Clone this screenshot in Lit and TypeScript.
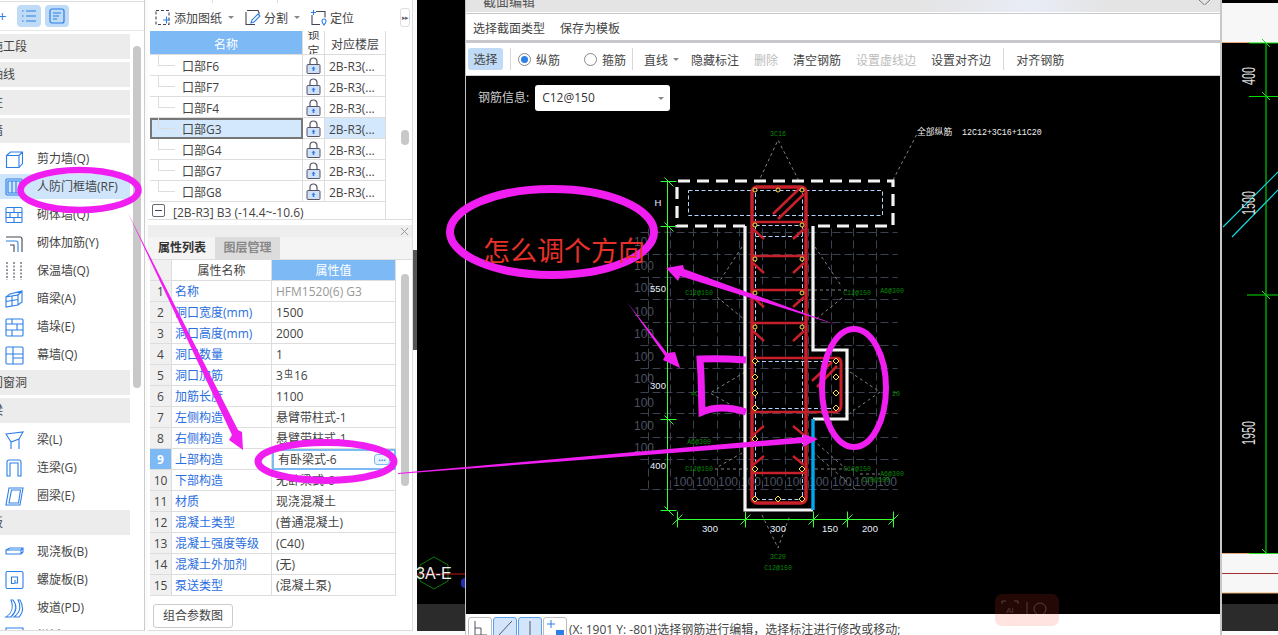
import { LitElement, html, css, svg } from "lit";
import { customElement } from "lit/decorators.js";

const ic: Record<string, any> = {
  cube: svg`<path d="M1.5 5.5h12.5v12H1.5zM1.5 5.5l4-3.5h12v11.5l-3.5 4M14 5.5l3.5-3.5"/>`,
  door: svg`<rect x="1" y="1" width="16" height="16" rx="1"/><path d="M3 3h12v12H3zM7 3v12M11 3v12"/>`,
  brick: svg`<rect x="1" y="1.5" width="16" height="15" rx="1"/><path d="M1 6.5h16M1 11.5h16M9 1.5v5M5 6.5v5M13 6.5v5M9 11.5v5"/>`,
  rebar: svg`<path stroke="#445" d="M1 3h14a2 2 0 0 1 2 2v13"/><path d="M1 7h10a2 2 0 0 1 2 2v9"/><path stroke="#445" d="M5 11h4v7"/>`,
  insul: svg`<path stroke="#445" stroke-dasharray="2 1.5" d="M2 0v18M9 0v18M16 0v18"/>`,
  hidden: svg`<path d="M1 7l4-3 12-3v11l-4 3-12 2zM1 7l12-2v10M13 5l4-4M1 11.5l12-2" /><path d="M7 6v10"/>`,
  pier: svg`<rect x="1" y="1" width="17" height="17" rx="1"/><path d="M1 6h17M1 12h17M7 1v5M12 6v6M7 12v6"/>`,
  curtain: svg`<rect x="1" y="1" width="17" height="17" rx="1"/><path d="M1 8h17M8 1v17M8 12h10"/>`,
  beam: svg`<path d="M1 3L18 1L14 8L6 11ZM6 11v7M14 8v10"/>`,
  link: svg`<path d="M2 17V3a2 2 0 0 1 2-2h10a2 2 0 0 1 2 2v14h-3V4H5v13z"/>`,
  ring: svg`<path d="M4 1h14l-3 17H1zM6.5 3h9l-2 13H4z"/>`,
  slab: svg`<path d="M1 7l4-2h13v4l-2 2H1zM1 7h15v4M16 7l2-2"/>`,
  spiral: svg`<rect x="1" y="0.5" width="17" height="17" rx="1.5"/><path d="M9.5 12.5H6.5V6h6v6h-2.5V9"/>`,
  ramp: svg`<path d="M8 1c4 5 4 11-2 17H1c5-3 8-9 5-17zM13 1c3 5 3 12-4 17h5c5-5 4-12 1-17z"/>`,
  edge: svg`<path d="M1 1h17v6H1zM1 7v11M18 7v11"/>`,
};

const wallItems = [
  ["cube", "剪力墙(Q)"], ["door", "人防门框墙(RF)", true], ["brick", "砌体墙(Q)"], ["rebar", "砌体加筋(Y)"],
  ["insul", "保温墙(Q)"], ["hidden", "暗梁(A)"], ["pier", "墙垛(E)"], ["curtain", "幕墙(Q)"],
];
const beamItems = [["beam", "梁(L)"], ["link", "连梁(G)"], ["ring", "圈梁(E)"]];
const slabItems = [["slab", "现浇板(B)"], ["spiral", "螺旋板(B)"], ["ramp", "坡道(PD)"], ["edge", "栏板(K)"]];

const trees = ["口部F6", "口部F7", "口部F4", "口部G3", "口部G4", "口部G7", "口部G8"];
const props: [string, any][] = [
  ["名称", "HFM1520(6) G3"], ["洞口宽度(mm)", "1500"], ["洞口高度(mm)", "2000"], ["洞口数量", "1"],
  ["洞口加筋", null], ["加筋长度", "1100"], ["左侧构造", "悬臂带柱式-1"], ["右侧构造", "悬臂带柱式-1"],
  ["上部构造", "有卧梁式-6"], ["下部构造", "无卧梁式-6"], ["材质", "现浇混凝土"], ["混凝土类型", "(普通混凝土)"],
  ["混凝土强度等级", "(C40)"], ["混凝土外加剂", "(无)"], ["泵送类型", "(混凝土泵)"],
];

const lock = html`<svg class="lock" viewBox="0 0 15 17"><path d="M4 8V4.500a3.500 3.500 0 0 1 7 0V8" fill="none" stroke="#556" stroke-width="1.2"/><rect x="1" y="7.500" width="13" height="9" rx="1" fill="#cfe0f7" stroke="#556" stroke-width="1"/><path d="M7.500 9.500l2 2.200H8.300v2.300H6.700v-2.300H5.500z" fill="#2d7fe8"/></svg>`;

const hLines = [232, 254, 277, 299, 322, 345, 368, 392, 413, 437, 459, 489];
const vLines = [648, 670, 693, 717, 739, 762, 785, 808, 831, 853, 876];
const leftNums = [242, 266, 288, 312, 334, 357, 379, 403, 426, 448];
const bottomNums = [683, 706, 728, 751, 773, 796, 819, 842, 864, 887];
const dots: [number, number][] = [[755, 190], [778, 190], [802, 190], [755, 225], [802, 225], [755, 259], [802, 259], [755, 293], [802, 293], [755, 327], [802, 327]];
const diamonds: [number, number][] = [[755, 361], [755, 377], [755, 393], [755, 408], [755, 439], [755, 469], [802, 469], [755, 499], [778, 499], [802, 499], [836, 361], [836, 377], [836, 393], [836, 408]];
const hooks = [263, 297, 331, 229];
const greens: [string, number, number][] = [
  ["3C16", 778, 136], ["C12@150", 699, 295], ["C12@150", 857, 295], ["A6@300", 892, 293], ["A6@300", 699, 444],
  ["C12@150", 699, 471], ["C12@150", 857, 471], ["A6@300", 892, 476], ["C10@100", 876, 482], ["4C", 695, 396],
  ["20", 896, 396], ["3C20", 778, 559], ["C12@150", 778, 570],
];
const whites: [string, number, number][] = [
  ["H", 658, 206], ["550", 658, 292], ["300", 658, 389], ["400", 658, 469],
  ["300", 710, 532], ["300", 778, 532], ["150", 830, 532], ["200", 870, 532],
];
const vTicks: [number, number][] = [[668, 181], [668, 226], [668, 419], [668, 510]];
const hTicks: [number, number][] = [[677, 519], [745, 519], [813, 519], [847, 519], [893, 519]];

@customElement("app-root")
export class AppRoot extends LitElement {
  static styles = css`
    :host { display: block; position: relative; width: 1278px; height: 635px; overflow: hidden; background: #fbfbfb; color: #444;
      font-family: "Open Sans", "Noto Sans CJK SC", sans-serif; font-size: 12px; line-height: 1; }
    * { box-sizing: border-box; }
    .page { display: flex; height: 635px; }

    .left { width: 145px; height: 631px; flex: none; background: #fff; border-right: 1px solid #ccc; border-bottom: 1px solid #ddd; overflow: hidden; }
    .ltop { height: 30px; margin-top: 1px; border-top: 1px solid #ddd; border-bottom: 1px solid #e8e8e8; display: flex; align-items: center; gap: 4px; padding-left: 17px; position: relative; }
    .plus { margin-left: -19px; width: 15px; color: #2d7fe8; font-size: 15px; text-align: left; }
    .tbtn { width: 24px; height: 22px; border-radius: 4px; background: #bfdbf5; display: flex; align-items: center; justify-content: center; }
    .tbtn svg { width: 16px; height: 16px; fill: none; stroke: #2d7fe8; stroke-width: 1.2; }
    .lbody { display: flex; gap: 3px; padding-top: 3px; }
    .list { width: 130px; display: flex; flex-direction: column; gap: 3px; flex: none; }
    .sec { height: 25px; background: #ececec; display: flex; align-items: center; overflow: hidden; flex: none; }
    .sec span { margin-left: -9px; white-space: nowrap; }
    .items.m2 { margin: -2px 0 -1px; }
    .items.m1 { margin: -1px 0 -2px; }
    .item { height: 28px; display: flex; align-items: center; white-space: nowrap; padding: 2px 0 1px 5px; }
    .item.sel { background: #cfe5fc; background-clip: content-box; padding-left: 0; }
    .item.sel svg { margin-left: 5px; }
    .item svg { width: 18px; height: 18px; margin-right: 14px; fill: none; stroke: #2d7fe8; stroke-width: 1.1; flex: none; overflow: visible; }
    .lthumb { width: 8px; height: 342px; margin-top: 12px; background: #c8c8c8; border-radius: 4px; }

    .mid { width: 265px; height: 631px; margin-left: 3px; flex: none; background: #fff; border-right: 1px solid #ddd; border-bottom: 1px solid #ddd; display: flex; flex-direction: column; padding-left: 2px; overflow: hidden; }
    .mtabs { height: 3px; display: flex; flex: none; margin-left: -2px; }
    .mtabs i { width: 65px; border-right: 1px solid #ddd; }
    .mbar { height: 28px; display: flex; align-items: center; flex: none; padding: 4px 0 0 4px; }
    .mbar svg { width: 17px; height: 17px; fill: none; stroke: #445; stroke-width: 1.1; flex: none; margin: -4px 3px 0 0; }
    .tri { width: 0; height: 0; border-left: 3px solid transparent; border-right: 3px solid transparent; border-top: 3px solid #888; flex: none; }
    .mbar .tri { margin: -4px 10px 0 6px; }
    .more { margin: -4px 2px 0 auto; width: 10px; height: 19px; border: 1px solid #ddd; border-radius: 3px; font-size: 7px; color: #667; display: flex; align-items: center; justify-content: center; letter-spacing: -1px; }
    .ttop { display: flex; height: 189px; flex: none; border-bottom: 1px solid #ddd; margin-left: -2px; padding-left: 2px; }
    .tgrid { display: grid; grid-template-columns: 153px 22px 61px; grid-template-rows: 24px repeat(7, 21px) 18px; width: 236px; flex: none; }
    .tgrid > div { border-right: 1px solid #ddd; border-bottom: 1px solid #ddd; display: flex; align-items: center; overflow: hidden; }
    .tgrid .h { background: #fff; justify-content: center; border-right: 1px solid #ddd; padding-top: 4px; }
    .tgrid .h.b { background: #7db9f5; color: #fff; }
    .tgrid .h.lk { padding-top: 0; }
    .lockhead { width: 13px; text-align: center; line-height: 17px; flex: none; }
    .tree { padding: 3px 0 0 32px; position: relative; }
    .tree::before { content: ""; position: absolute; left: 8px; top: 0; bottom: 10px; width: 1px; background: #ddd; }
    .tree::after { content: ""; position: absolute; left: 8px; top: 10px; width: 17px; height: 1px; background: #ddd; }
    .tree.sel { background: #d3e8fd; outline: 2px solid #777; outline-offset: -2px; }
    .cellb { justify-content: center; }
    .lock { width: 15px; height: 17px; }
    .cellc { padding: 3px 0 0 4px; white-space: nowrap; }
    .cellc.sel { background: #d3e8fd; }
    .grp { grid-column: 1 / 4; padding-left: 2px; gap: 8px; }
    .grp span:last-child { padding-top: 4px; }
    .box { width: 13px; height: 13px; border: 1px solid #667; border-radius: 2px; display: flex; align-items: center; justify-content: center; flex: none; }
    .box::before { content: ""; width: 7px; height: 1px; background: #445; }
    .tthumb { width: 8px; height: 15px; background: #c8c8c8; border-radius: 4px; margin: 99px 0 0 15px; }

    .gap5 { height: 5px; flex: none; }
    .phead { height: 12px; background: #eee; display: flex; justify-content: flex-end; align-items: center; flex: none; margin-left: -2px; color: #999; padding-right: 2px; }
    .phead svg { width: 7px; height: 7px; stroke: #999; margin-right: 2px; }
    .tabs { height: 23px; display: flex; flex: none; background: #f4f4f4; margin-left: -2px; padding-left: 2px; border-bottom: 1px solid #ddd; }
    .tab { width: 64px; display: flex; align-items: center; justify-content: center; font-weight: 700; color: #333; }
    .tab.off { width: 65px; background: #dcdcdc; color: #888; margin-left: 1px; }
    .pbody { display: flex; height: 340px; flex: none; }
    .pgrid { display: grid; grid-template-columns: 22px 100px 124px; grid-template-rows: 21px repeat(15, 21px); width: 246px; flex: none; overflow: hidden; }
    .pgrid > div { display: flex; align-items: center; border-right: 1px solid #ddd; border-bottom: 1px solid #ddd; white-space: nowrap; overflow: hidden; padding-top: 2px; }
    .pnum { background: #f0f0f0; justify-content: center; color: #444; }
    .pnum.on { background: #7db9f5; color: #fff; font-weight: 700; }
    .pname { color: #2a6ee0; padding-left: 3px; }
    .pval { padding-left: 4px; color: #444; }
    .pval.grey { color: #999; }
    .pval.on { outline: 2px solid #7db9f5; outline-offset: -2px; padding-left: 6px; justify-content: space-between; padding-right: 5px; }
    .dots { width: 16px; height: 11px; border: 1px solid #7db9f5; border-radius: 3px; background: #e8f2fd; font-size: 9px; color: #2d7fe8; display: flex; align-items: center; justify-content: center; font-weight: 700; margin-top: -2px; }
    .sup { font-size: 9px; position: relative; top: -3px; margin: 0 1px; }
    .phl { justify-content: center; }
    .phb { justify-content: center; background: #7db9f5; color: #fff; }
    .pthumb { width: 8px; height: 212px; margin: 14px 0 0 5px; background: #c8c8c8; border-radius: 4px; flex: none; }
    .pfoot { padding: 4px 0 0 3px; flex: none; }
    .gbtn { width: 80px; height: 24px; border: 1px solid #ccc; border-radius: 3px; display: flex; align-items: center; justify-content: center; background: #fff; }

    .split { width: 4px; height: 631px; flex: none; display: flex; flex-direction: column; }
    .split i { display: block; height: 100px; margin-top: 250px; background: #555; }

    .cadl { width: 48px; flex: none; height: 635px; display: block; }
    .cadr { width: 56px; flex: none; height: 635px; display: block; }

    .dlg { width: 757px; height: 635px; flex: none; display: flex; flex-direction: column; border-left: 1px solid #c4c4c4; border-right: 2px solid #c8c8c8; background: #fff; overflow: hidden; }
    .dtitle { height: 12px; flex: none; background: linear-gradient(90deg, #e4e4e4 60%, #e8ecf6 75%, #e4e4e4 85%); display: flex; justify-content: space-between; padding: 0 10px 0 17px; overflow: hidden; color: #555; font-size: 13px; }
    .dtitle span { margin-top: -5px; }
    .dtitle svg { width: 11px; height: 5px; fill: none; stroke: #777; margin-top: 0; }
    .dmenu { height: 30px; flex: none; margin-top: 1px; padding: 4px 0 0 7px; border-top: 1px solid #c8c8cc; border-bottom: 3px solid #c8c8cc; display: flex; align-items: center; gap: 15px; background: #fff; }
    .dbar { height: 33px; flex: none; display: flex; align-items: center; padding-left: 2px; border-bottom: 1px solid #ccc; white-space: nowrap; }
    .dbar .t { padding-top: 4px; }
    .sel-btn { width: 35px; height: 22px; background: #bfdbf5; border-radius: 3px; display: flex; align-items: center; justify-content: center; flex: none; padding-top: 2px; }
    .vsep { width: 1px; height: 22px; background: #d8d8d8; flex: none; }
    .radio { width: 13px; height: 13px; border-radius: 50%; border: 1px solid #888; display: flex; align-items: center; justify-content: center; flex: none; }
    .radio.on::before { content: ""; width: 7px; height: 7px; border-radius: 50%; background: #2d7fe8; }
    .s6 { margin-left: 6px; } .s5 { margin-left: 5px; } .s23 { margin-left: 24px; } .s12 { margin-left: 12px; } .s11 { margin-left: 11px; }
    .s15 { margin-left: 15px; } .s7 { margin-left: 7px; }
    .muted { color: #bbb; }
    .dbar .tri { margin: 0 0 0 5px; }
    .canvas { height: 538px; flex: none; background: #000; position: relative; }
    .canvas > svg { display: block; width: 754px; height: 538px; }
    .info { position: absolute; left: 12px; top: 9px; display: flex; align-items: center; gap: 6px; color: #ccc; }
    .sbox { width: 135px; height: 26px; background: #fff; border-radius: 3px; color: #333; display: flex; align-items: center; justify-content: space-between; padding: 0 6px 0 7px; }
    .stat { height: 21px; flex: none; display: flex; align-items: flex-start; padding: 3px 0 0 2px; gap: 1px; white-space: nowrap; overflow: hidden; background: #fff; }
    .sb { width: 24px; height: 22px; border: 1px solid #bbb; border-radius: 3px; flex: none; display: flex; align-items: center; justify-content: center; background: #fff; }
    .sb.on { background: #d3e5fb; border-color: #5aa0ee; }
    .sb svg { width: 18px; height: 18px; fill: none; stroke: #556; }
    .stxt { margin: 7px 0 0 1px; color: #444; }

    .notes { position: absolute; left: 0; top: 0; width: 1278px; height: 635px; pointer-events: none; }
  `;

  private row(i: any[]) {
    return html`<div class="item ${i[2] ? "sel" : ""}"><svg viewBox="0 0 18 18">${ic[i[0]]}</svg>${i[1]}</div>`;
  }

  private drawing() {
    const mono = "Liberation Mono, monospace";
    return svg`
      <g stroke="#3a4150" stroke-width="1" stroke-dasharray="8 4" fill="none" transform="translate(.5 .5)">
        ${hLines.map((y) => svg`<line x1="640" x2="897" y1=${y} y2=${y}/>`)}
        ${vLines.map((x) => svg`<line y1="228" y2="490" x1=${x} x2=${x}/>`)}
      </g>
      <g fill="#4a5160" font-family="Liberation Sans, sans-serif" font-size="12" text-anchor="middle">
        ${leftNums.map((y) => svg`<text x="644" y=${y + 4}>100</text>`)}
        ${bottomNums.map((x) => svg`<text x=${x} y="486">100</text>`)}
      </g>
      <g stroke="#808080" stroke-width="1" stroke-dasharray="3 3" fill="none">
        <path d="M758 183L778 140L800 183M893 180L917 134"/>
        <path d="M742 247L717 285M717 297L745 320M815 247L842 287M842 298L815 320"/>
        <path d="M745 372L710 393L745 413M850 372L880 392L850 413"/>
        <path d="M742 453L716 468M813 440L845 468M813 452L856 490M762 515L778 548L790 515"/>
        <path d="M778 290H850M715 469H750M815 469H855M860 474H880"/>
      </g>
      <g stroke="#b4d4ff" stroke-width="1" stroke-dasharray="4 2.5" fill="none" transform="translate(.5 .5)">
        <rect x="688" y="190" width="194" height="25"/>
        <path d="M755 186V503M802 186V503M755 225H802M755 236H802M755 361H836M755 408H836M755 499H802M840 361V408"/>
      </g>
      <g stroke="#f4f4f4" stroke-width="3.2" fill="none">
        <path stroke-dasharray="12 7" d="M745 226H677V181H893V226H813"/>
        <path d="M745 226V510H813M813 226V350H847V419H813"/>
      </g>
      <path d="M813 419V510" stroke="#00a8f0" stroke-width="3.4"/>
      <g stroke="#c8202a" fill="none" stroke-width="3.4">
        <rect x="752" y="187" width="54" height="316" rx="5"/>
        <path d="M838 358q3 1 3 5V405q0 5-3 6" stroke-width="3"/>
        <path stroke-width="2.6" d="M752 222H806M752 256H806M752 290H806M752 323H806M752 358H838M752 412H838M752 473H806"/>
        <path stroke-width="2.6" d="M773 214L800 188M778 219L804 194M812 381L832 362M817 387L837 366"/>
        <path stroke-width="2.4" d="M753 435L764 426M804 435L793 426M753 465L764 456M804 465L793 456"/>
        ${hooks.map((y) => svg`<path stroke-width="2.4" d="M753 ${y}L764 ${y + 10}M804 ${y}L793 ${y + 10}"/>`)}
      </g>
      <g fill="#000" stroke="#ffe14a" stroke-width="1">
        ${dots.map(([x, y]) => svg`<circle cx=${x} cy=${y} r="2"/>`)}
        ${diamonds.map(([x, y]) => svg`<path d="M${x} ${y - 3}l3 3-3 3-3-3z"/>`)}
      </g>
      <g stroke="#33ff33" stroke-width="1" fill="none" transform="translate(.5 .5)">
        <path d="M667 181V510M677 519H893"/>
        ${vTicks.map(([x, y]) => svg`<path d="M${x - 8} ${y}H${x + 8}M${x - 4} ${y - 4}L${x + 5} ${y + 5}"/>`)}
        ${hTicks.map(([x, y]) => svg`<path d="M${x} ${y - 8}V${y + 8}M${x - 5} ${y + 5}L${x + 5} ${y - 5}"/>`)}
      </g>
      <g fill="#0a8a0a" font-family=${mono} font-size="6.600" text-anchor="middle">
        ${greens.map(([t, x, y]) => svg`<text x=${x} y=${y}>${t}</text>`)}
      </g>
      <g fill="#e8f2ff" font-family="Liberation Sans, sans-serif" font-size="9.500" text-anchor="middle">
        ${whites.map(([t, x, y]) => svg`<text x=${x} y=${y}>${t}</text>`)}
      </g>
      <text x="917" y="135" fill="#eee" font-family="Noto Sans CJK SC, sans-serif" font-size="8.800">全部纵筋</text>
      <text x="962" y="135" fill="#eee" font-family=${mono} font-size="8.300">12C12+3C16+11C20</text>
    `;
  }

  render() {
    return html`
      <div class="page">
        <aside class="left">
          <div class="ltop">
            <span class="plus">+</span>
            <div class="tbtn"><svg viewBox="0 0 16 16"><path d="M5 3h10M5 8h10M5 13h10M1 3h1.500M1 8h1.500M1 13h1.500"/></svg></div>
            <div class="tbtn"><svg viewBox="0 0 16 16"><rect x="1" y="1" width="14" height="14" rx="2"/><path d="M4 5h8M4 8h6M4 11h4"/></svg></div>
          </div>
          <div class="lbody">
            <div class="list">
              ${["施工段", "轴线", "柱", "墙"].map((s) => html`<div class="sec"><span>${s}</span></div>`)}
              <div class="items m2">${wallItems.map((i) => this.row(i))}</div>
              <div class="sec"><span>门窗洞</span></div>
              <div class="sec"><span>梁</span></div>
              <div class="items m1">${beamItems.map((i) => this.row(i))}</div>
              <div class="sec"><span>板</span></div>
              <div class="items m1">${slabItems.map((i) => this.row(i))}</div>
            </div>
            <div class="lthumb"></div>
          </div>
        </aside>

        <section class="mid">
          <div class="mtabs"><i></i><i></i></div>
          <div class="mbar">
            <svg viewBox="0 0 17 17"><path stroke-dasharray="3 2" d="M2 1.500h13v14H2z"/><path stroke="#2d7fe8" d="M9 11h7M12.500 7.500v7"/></svg>添加图纸<span class="tri"></span>
            <svg viewBox="0 0 17 17"><path d="M3 1.500h11l1 2v2M2 3v12.500h9"/><path stroke="#2d7fe8" d="M7 14l1-3 6-6 2 2-6 6z"/></svg>分割<span class="tri"></span>
            <svg viewBox="0 0 17 17"><path d="M6 2.500h9v6M2 6v9.500h8"/><path stroke="#2d7fe8" d="M3.500 1v5M1 3.500h5M12 12a2 2 0 1 1 4 0c0 2-2 4-2 4s-2-2-2-4z"/></svg><span>定位</span>
            <div class="more">▸▸</div>
          </div>
          <div class="ttop">
            <div class="tgrid">
              <div class="h b">名称</div>
              <div class="h lk"><span class="lockhead">锁定</span></div>
              <div class="h">对应楼层</div>
              ${trees.map((t, i) => html`
                <div class="tree ${i === 3 ? "sel" : ""}">${t}</div>
                <div class="cellb">${lock}</div>
                <div class="cellc ${i === 3 ? "sel" : ""}">2B-R3(...</div>`)}
              <div class="grp"><span class="box"></span><span>[2B-R3] B3 (-14.4~-10.6)</span></div>
            </div>
            <div class="tthumb"></div>
          </div>
          <div class="gap5"></div>
          <div class="phead"><svg viewBox="0 0 7 7"><path d="M0 0l7 7M7 0l-7 7"/></svg></div>
          <div class="tabs"><div class="tab">属性列表</div><div class="tab off">图层管理</div></div>
          <div class="pbody">
            <div class="pgrid">
              <div class="pnum"></div><div class="phl">属性名称</div><div class="phb">属性值</div>
              ${props.map(([n, v], i) => html`
                <div class="pnum ${i === 8 ? "on" : ""}">${i + 1}</div>
                <div class="pname">${n}</div>
                <div class="pval ${i === 0 ? "grey" : ""} ${i === 8 ? "on" : ""}">
                  ${v === null ? html`3<span class="sup">虫</span>16` : v}${i === 8 ? html`<span class="dots">···</span>` : ""}
                </div>`)}
            </div>
            <div class="pthumb"></div>
          </div>
          <div class="pfoot"><div class="gbtn">组合参数图</div></div>
        </section>

        <div class="split"><i></i></div>

        <svg class="cadl" viewBox="417 0 48 635">
          <rect x="417" y="0" width="48" height="631" fill="#000"/>
          <rect x="417" y="604" width="48" height="27" fill="#2b2b2b"/>
          <path d="M434 557l14 8v16l-14 8-14-8v-16z" fill="none" stroke="#0a7a0a"/>
          <path d="M417 574H465" stroke="#c01818"/>
          <text x="416" y="579" fill="#eee" font-family="Liberation Sans, sans-serif" font-size="16">3A-E</text>
          <path d="M465 578a4 4 0 0 0-4 5 4 4 0 0 0 4 5z" fill="#2030b0"/>
        </svg>

        <div class="dlg">
          <div class="dtitle"><span>截面编辑</span><svg viewBox="0 0 11 5"><path d="M0 0l5.500 5 5.500-5"/></svg></div>
          <div class="dmenu"><span>选择截面类型</span><span>保存为模板</span></div>
          <div class="dbar">
            <div class="sel-btn">选择</div><span class="vsep s7"></span>
            <span class="radio on s7"></span><span class="t s5">纵筋</span>
            <span class="radio s23"></span><span class="t s5">箍筋</span><span class="vsep s6"></span>
            <span class="t s11">直线</span><span class="tri"></span>
            <span class="t s12">隐藏标注</span><span class="t muted s15">删除</span><span class="t s15">清空钢筋</span>
            <span class="t muted s15">设置虚线边</span><span class="t s15">设置对齐边</span><span class="vsep s12"></span><span class="t s12">对齐钢筋</span>
          </div>
          <div class="canvas">
            <svg viewBox="466 76 754 538">${this.drawing()}</svg>
            <div class="info">钢筋信息:<div class="sbox">C12@150<span class="tri"></span></div></div>
          </div>
          <div class="stat">
            <div class="sb"><svg viewBox="0 0 18 18"><path d="M4 2V16H16M4 9h6v7"/></svg></div>
            <div class="sb on"><svg viewBox="0 0 18 18"><path d="M2 17L16 2"/></svg></div>
            <div class="sb on"><svg viewBox="0 0 18 18"><path d="M9 2V17"/></svg></div>
            <div class="sb"><svg viewBox="0 0 18 18"><path stroke="#2d7fe8" d="M1 5h8M5 1v8"/><rect x="10" y="11" width="8" height="7" fill="#2d7fe8" stroke="none"/></svg></div>
            <span class="stxt">(X: 1901 Y: -801)选择钢筋进行编辑，选择标注进行修改或移动;</span>
          </div>
        </div>

        <svg class="cadr" viewBox="1222 0 56 635">
          <rect x="1222" y="0" width="56" height="631" fill="#000"/>
          <rect x="1222" y="3" width="56" height="40" fill="#f7f7f7"/>
          <path d="M1222 42.500H1250" stroke="#e8a878"/>
          <path d="M1249 43H1278M1249 96.500H1278M1247 295H1278" stroke="#00e000"/>
          <path d="M1266 43V553" stroke="#009a00" stroke-width="1.600"/>
          <path d="M1262 39l8 8M1262 92l8 8M1262 291l8 8M1262 549l8 8" stroke="#22dd22"/>
          <path d="M1223 227L1278 172M1232 237L1278 190" stroke="#18d8e0" stroke-width="1.200"/>
          <g fill="#ddd" font-family="Liberation Sans, sans-serif" font-size="15">
            <text transform="translate(1255 85) rotate(-90) scale(.72 1.2)">400</text>
            <text transform="translate(1255 215) rotate(-90) scale(.72 1.2)">1500</text>
            <text transform="translate(1255 445) rotate(-90) scale(.72 1.2)">1950</text>
          </g>
          <rect x="1222" y="553" width="56" height="40" fill="#f7f7f7"/>
          <path d="M1222 553.500H1250" stroke="#e8a878"/>
          <path d="M1249 553.500H1278" stroke="#22dd22"/>
          <path d="M1222 573.500H1278" stroke="#a03030"/>
          <path d="M1222 593H1278" stroke="#e8b070"/>
          <rect x="1222" y="604" width="56" height="27" fill="#2b2b2b"/>
        </svg>
      </div>

      <svg class="notes" viewBox="0 0 1278 635">
        <g fill="none" stroke="#f01ef0">
          <ellipse cx="79.500" cy="190" rx="59" ry="20" stroke-width="6.500"/>
          <ellipse cx="326" cy="461.500" rx="68" ry="19" stroke-width="7"/>
          <ellipse cx="552" cy="232" rx="102" ry="43" stroke-width="8"/>
          <ellipse cx="854" cy="388" rx="32" ry="59" stroke-width="6"/>
          <path d="M746 360Q720 358 700 359L701 375L702 412Q720 404 746 412" stroke-width="7"/>
        </g>
        <g fill="#f01ef0">
          <path d="M128 213L238 430L242 432L243 450L229 440L232 435Z"/>
          <path d="M398 473L803 437V434L818 439L803 447V443L398 474Z"/>
          <path d="M837 325L684 269L683 265L666 268L678 281L680 276Z"/>
          <path d="M627 302L667 353L675 352L680 368L663 360L665 356Z"/>
        </g>
        <text x="483" y="261" fill="#e8302a" font-family="Noto Sans CJK SC, sans-serif" font-size="27">怎么调个方向</text>
        <g>
          <rect x="995" y="594" width="64" height="32" rx="7" fill="#ff3c28" fill-opacity=".14"/>
          <g fill="none" stroke="#fff" stroke-opacity=".22" stroke-width="1">
            <path d="M1002 604v-3h4M1014 601h4v3M1002 616v3h4M1014 619h4v-3M1027 602v16"/>
            <circle cx="1040" cy="609" r="6"/>
            <path d="M1044 614l4 4"/>
          </g>
          <text x="1010" y="613" font-size="8" fill="#fff" fill-opacity=".22" text-anchor="middle" font-family="Liberation Sans, sans-serif">AI</text>
        </g>
      </svg>
    `;
  }
}
